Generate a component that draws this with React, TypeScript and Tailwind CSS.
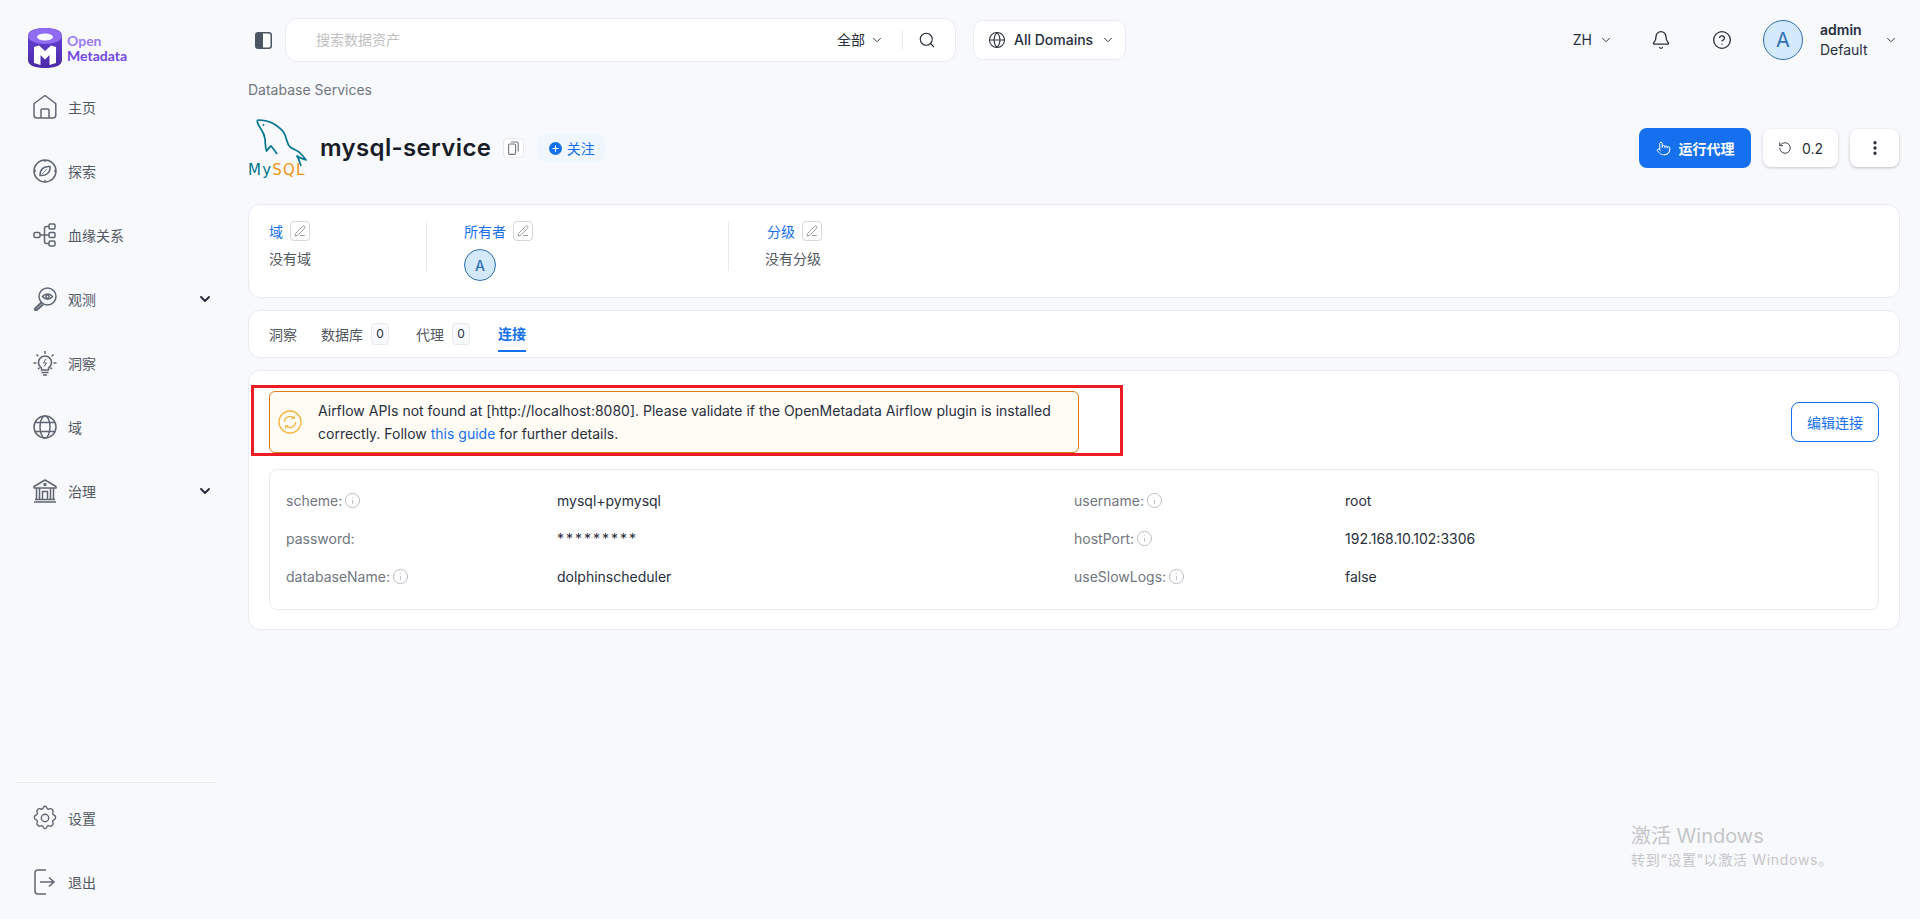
import { ChevronDown, Search, Globe, Bell, CircleHelp, RotateCcw, EllipsisVertical, Pointer, PenLine, Info, Plus } from "lucide-react"

const FONT = "font-['Inter','Noto_Sans_CJK_SC',sans-serif]"

function HomeIcon() {
  return (
    <svg width="24" height="26" viewBox="0 0 24 26" fill="none" stroke="#5f6673" strokeWidth="1.5" strokeLinejoin="round">
      <path d="M12 1.5 L22 9 a1.5 1.5 0 0 1 .8 1.5 V21 a3 3 0 0 1 -3 3 H4 a3 3 0 0 1 -3 -3 V10.5 A1.5 1.5 0 0 1 1.8 9 Z" />
      <path d="M8 24 V16 a1 1 0 0 1 1 -1 h6 a1 1 0 0 1 1 1 v8" />
    </svg>
  )
}

function CompassIcon() {
  return (
    <svg width="24" height="24" viewBox="0 0 24 24" fill="none" stroke="#5f6673" strokeWidth="1.5">
      <circle cx="12" cy="12" r="11" />
      <path d="M12 1v2M12 21v2M1 12h2M21 12h2" />
      <path d="M7 16.5 C7 10 11 7 17 7.5 C17.5 13.5 13.5 17 7 16.5 Z" />
      <path d="M9 15 L14 10" strokeWidth="0.8" />
    </svg>
  )
}

function LineageIcon() {
  return (
    <svg width="24" height="24" viewBox="0 0 24 24" fill="none" stroke="#5f6673" strokeWidth="1.5">
      <rect x="1" y="9.5" width="6" height="5" rx="1.2" />
      <rect x="16" y="1" width="6" height="5" rx="1.2" />
      <rect x="16" y="9.5" width="6" height="5" rx="1.2" />
      <rect x="16" y="18" width="6" height="5" rx="1.2" />
      <path d="M7 12 H16 M11.5 12 V5.5 a2 2 0 0 1 2 -2 H16 M11.5 12 V18.5 a2 2 0 0 0 2 2 H16" />
    </svg>
  )
}

function ObserveIcon() {
  return (
    <svg width="24" height="24" viewBox="0 0 24 24" fill="none" stroke="#5f6673" strokeWidth="1.5">
      <circle cx="14.5" cy="9.5" r="8.5" />
      <path d="M9.5 9.5 C12 6 17 6 19.5 9.5 C17 13 12 13 9.5 9.5 Z" />
      <circle cx="14.5" cy="9.5" r="1.6" />
      <path d="M8.5 15.5 L2 21.5 a1.2 1.2 0 0 0 1.8 1.5 L10 17.5" strokeWidth="2" />
    </svg>
  )
}

function InsightIcon() {
  return (
    <svg width="24" height="26" viewBox="0 0 24 26" fill="none" stroke="#5f6673" strokeWidth="1.5">
      <path d="M12 1v3M3.5 4.5l1.8 1.8M20.5 4.5l-1.8 1.8M0.5 13h3M20.5 13h3M5 19l1.6-1.4M19 19l-1.6-1.4" />
      <path d="M8.5 20 V18 C6.5 16.5 5.5 14.8 5.5 12.5 a6.5 6.5 0 0 1 13 0 C18.5 14.8 17.5 16.5 15.5 18 V20 Z" />
      <path d="M8.5 22.5 H15.5 M10 25 H14" />
      <path d="M12.8 9 L10.5 13 H13.5 L11.2 16.5" strokeWidth="1" />
    </svg>
  )
}

function DomainIcon() {
  return (
    <svg width="24" height="24" viewBox="0 0 24 24" fill="none" stroke="#5f6673" strokeWidth="1.5">
      <circle cx="12" cy="12" r="11" />
      <ellipse cx="12" cy="12" rx="5" ry="11" />
      <path d="M2.2 7.5 H21.8 M2.2 16.5 H21.8" />
    </svg>
  )
}

function GovernIcon() {
  return (
    <svg width="24" height="24" viewBox="0 0 24 24" fill="none" stroke="#5f6673" strokeWidth="1.5">
      <path d="M12 1 L23 7.5 V9 H1 V7.5 Z" strokeLinejoin="round" />
      <circle cx="12" cy="5.5" r="1" />
      <path d="M3.5 9 V20 M6.5 9 V20 M17.5 9 V20 M20.5 9 V20 M9.5 20 V12.5 H14.5 V20" />
      <path d="M2 20.5 H22 M1 23 H23" />
    </svg>
  )
}

function GearIcon() {
  return (
    <svg width="26" height="26" viewBox="0 0 24 24" fill="none" stroke="#5f6673" strokeWidth="1.3" strokeLinejoin="round">
      <path d="M12 1.2c1 0 1.4.7 1.7 1.6.3.9 1.3 1.3 2.1.9.9-.4 1.7-.6 2.4.1l.9.9c.7.7.5 1.5.1 2.4-.4.8 0 1.8.9 2.1.9.3 1.6.7 1.6 1.7v1.2c0 1-.7 1.4-1.6 1.7-.9.3-1.3 1.3-.9 2.1.4.9.6 1.7-.1 2.4l-.9.9c-.7.7-1.5.5-2.4.1-.8-.4-1.8 0-2.1.9-.3.9-.7 1.6-1.7 1.6s-1.4-.7-1.7-1.6c-.3-.9-1.3-1.3-2.1-.9-.9.4-1.7.6-2.4-.1l-.9-.9c-.7-.7-.5-1.5-.1-2.4.4-.8 0-1.8-.9-2.1-.9-.3-1.6-.7-1.6-1.7v-1.2c0-1 .7-1.4 1.6-1.7.9-.3 1.3-1.3.9-2.1-.4-.9-.6-1.7.1-2.4l.9-.9c.7-.7 1.5-.5 2.4-.1.8.4 1.8 0 2.1-.9.3-.9.7-1.6 1.7-1.6Z" />
      <circle cx="12" cy="12" r="3.4" />
    </svg>
  )
}

function LogoutIcon() {
  return (
    <svg width="24" height="26" viewBox="0 0 24 26" fill="none" stroke="#5f6673" strokeWidth="1.5">
      <path d="M13 1 H5 a3 3 0 0 0 -3 3 V22 a3 3 0 0 0 3 3 H13" />
      <path d="M7 13 H21 M16 8.5 L21 13 L16 17.5" />
    </svg>
  )
}

function OmLogo() {
  return (
    <svg width="34" height="40" viewBox="0 0 34 40">
      <defs>
        <linearGradient id="omBody" x1="0" y1="0" x2="0" y2="1">
          <stop offset="0" stopColor="#6a44d8" />
          <stop offset="1" stopColor="#4a2aa8" />
        </linearGradient>
      </defs>
      <path d="M0 8 C0 2 8 0 17 0 C26 0 34 2 34 8 V32 C34 38 26 40 17 40 C8 40 0 38 0 32 Z" fill="url(#omBody)" />
      <ellipse cx="17" cy="8" rx="17" ry="8" fill="#8f6cf2" />
      <ellipse cx="17" cy="9" rx="8" ry="3.5" fill="#f8f9fd" />
      <path d="M6 35 V19 L11 17.5 L17 23 L23 17.5 L28 19 V35 L21.5 37 V27 L17 31.5 L12.5 27 V37 Z" fill="#ffffff" />
    </svg>
  )
}

function MysqlLogo() {
  return (
    <div className="relative w-[62px] h-[60px]">
      <svg width="62" height="60" viewBox="0 0 62 60" fill="none" className="absolute inset-0">
        <path
          d="M9.5 2 C14 2 21 3 26 6 C31 9 35 12 37 17 C39 22 39 26 42 29 C45 31 48 32 51 34 C54 37 56 39 58 42 C55 41 52 40 49 38 C51 41 52 45 53 48"
          stroke="#00758f"
          strokeWidth="1.7"
          strokeLinejoin="round"
        />
        <path
          d="M9.5 2 C8.5 5 11 8 13 11 C15 14 16.5 17 17 21 C17.5 25 17 29 18.5 33 C20 31 21.5 29 23 28 C25 30 27 33 29 36"
          stroke="#00758f"
          strokeWidth="1.7"
          strokeLinejoin="round"
        />
        <circle cx="15.5" cy="7" r="0.9" fill="#00758f" />
      </svg>
      <div className="absolute left-0 top-[45px] text-[15px] leading-[14px] font-['DejaVu_Sans',sans-serif] whitespace-nowrap tracking-[1.2px]">
        <span className="text-[#00758f]">My</span>
        <span className="text-[#f29111]">SQL</span>
      </div>
    </div>
  )
}

function NavItem({ icon, label, hasChevron }: { icon: React.ReactNode; label: string; hasChevron?: boolean }) {
  return (
    <div className="flex items-center h-[64px] pl-[32px] pr-[19px]">
      <span className="w-[26px] h-[26px] flex items-center justify-center shrink-0">{icon}</span>
      <span className="ml-[10px] text-[14px] text-[#535862] flex-1">{label}</span>
      {hasChevron && <ChevronDown size={16} strokeWidth={3} className="text-[#292f3d]" />}
    </div>
  )
}

function EditBox() {
  return (
    <span className="w-[20px] h-[20px] ml-[7px] rounded-[4px] border border-[#d5d7da] bg-white flex items-center justify-center">
      <PenLine size={12} strokeWidth={1.4} className="text-[#717680]" />
    </span>
  )
}

function TinyAvatar() {
  return (
    <span className="w-[32px] h-[32px] rounded-full border border-[#2f6fb3] bg-[#d4e9fc] text-[#2f6fb3] text-[14px] font-medium flex items-center justify-center">
      A
    </span>
  )
}

function ConfigLabel({ text, info }: { text: string; info?: boolean }) {
  return (
    <div className="flex items-center gap-[2px] text-[14px] text-[#717680]">
      <span>{text}</span>
      {info && <Info size={17} strokeWidth={1.2} className="text-[#b0b4ba]" />}
    </div>
  )
}

function ConfigValue({ text, spaced }: { text: string; spaced?: boolean }) {
  return <div className={spaced ? "text-[14px] text-[#292f3d] tracking-[2px]" : "text-[14px] text-[#292f3d]"}>{text}</div>
}

export default function App() {
  return (
    <div className={`${FONT} relative flex w-full h-[919px] overflow-hidden bg-[#f8f9fd]`}>
      {/* Sidebar */}
      <aside className="w-[232px] shrink-0 flex flex-col">
        <div className="flex items-center pl-[28px] pt-[20px] h-[75px]">
          <OmLogo />
          <div className="ml-[5px] text-[14px] leading-[15px] font-bold font-['Lato',sans-serif]">
            <div className="text-[#9b7bf5]">Open</div>
            <div className="text-[#7147e8]">Metadata</div>
          </div>
        </div>
        <nav className="flex flex-col">
          <NavItem icon={<HomeIcon />} label="主页" />
          <NavItem icon={<CompassIcon />} label="探索" />
          <NavItem icon={<LineageIcon />} label="血缘关系" />
          <NavItem icon={<ObserveIcon />} label="观测" hasChevron />
          <NavItem icon={<InsightIcon />} label="洞察" />
          <NavItem icon={<DomainIcon />} label="域" />
          <NavItem icon={<GovernIcon />} label="治理" hasChevron />
        </nav>
        <div className="mt-auto pb-[5px]">
          <div className="mx-[16px] mb-[3px] border-t border-[#e9eaeb]" />
          <NavItem icon={<GearIcon />} label="设置" />
          <NavItem icon={<LogoutIcon />} label="退出" />
        </div>
      </aside>

      {/* Main */}
      <main className="flex-1 min-w-0 flex flex-col">
        <header className="flex items-center h-[80px]">
          <svg width="17" height="17" viewBox="0 0 17 17" className="ml-[23px] shrink-0">
            <rect x="0.75" y="0.75" width="15.5" height="15.5" rx="2.5" fill="#ffffff" stroke="#4b5563" strokeWidth="1.5" />
            <path d="M1 3 a2 2 0 0 1 2 -2 H8 V16 H3 a2 2 0 0 1 -2 -2 Z" fill="#4b5563" />
          </svg>
          <div className="ml-[13px] w-[671px] h-[44px] rounded-[12px] border border-[#e9eaf2] bg-white flex items-center pl-[30px] pr-[19px]">
            <span className="flex-1 text-[14px] text-[#bfbfbf] -translate-y-px">搜索数据资产</span>
            <span className="text-[14px] text-[#292f3d] -translate-y-px">全部</span>
            <ChevronDown size={14} strokeWidth={1.6} className="ml-[5px] text-[#292f3d]" />
            <span className="ml-[18px] w-px h-[20px] bg-[#e9eaeb]" />
            <Search size={18} strokeWidth={1.5} className="ml-[15px] text-[#292f3d]" />
          </div>
          <div className="ml-[17px] w-[153px] h-[40px] rounded-[10px] border border-[#e9eaf2] bg-white flex items-center pl-[14px]">
            <Globe size={18} strokeWidth={1.4} className="text-[#292f3d]" />
            <span className="ml-[8px] text-[14px] font-medium text-[#292f3d] -translate-y-px">All Domains</span>
            <ChevronDown size={14} strokeWidth={1.6} className="ml-[8px] text-[#292f3d]" />
          </div>
          <div className="ml-auto flex items-center pr-[22px]">
            <span className="text-[14px] text-[#292f3d] -translate-y-px">ZH</span>
            <ChevronDown size={14} strokeWidth={1.6} className="ml-[7px] text-[#292f3d]" />
            <Bell size={20} strokeWidth={1.6} className="ml-[38px] text-[#292f3d]" />
            <CircleHelp size={20} strokeWidth={1.6} className="ml-[41px] text-[#292f3d]" />
            <span className="ml-[31px] w-[40px] h-[40px] rounded-full border border-[#2f6fb3] bg-[#d4e9fc] text-[#2f6fb3] text-[20px] flex items-center justify-center">
              A
            </span>
            <div className="ml-[17px] w-[64px]">
              <div className="text-[14px] leading-[20px] font-semibold text-[#292f3d]">admin</div>
              <div className="text-[14px] leading-[20px] text-[#292f3d]">Default</div>
            </div>
            <ChevronDown size={14} strokeWidth={1.6} className="text-[#292f3d]" />
          </div>
        </header>

        <div className="pl-[16px] pr-[20px] flex flex-col">
          <div className="h-[20px] text-[14px] leading-[20px] text-[#717680]">Database Services</div>

          {/* Title row */}
          <div className="mt-[18px] h-[60px] flex items-center">
            <MysqlLogo />
            <h1 className="ml-[10px] text-[24px] font-semibold text-[#181d27] tracking-[0.35px]">mysql-service</h1>
            <span className="ml-[12px] w-[21px] h-[20px] rounded-[4px] border border-[#e9eaeb] bg-white flex items-center justify-center">
              <svg width="11" height="14" viewBox="0 0 11 14" fill="none" stroke="#717680" strokeWidth="1.1">
                <rect x="0.6" y="3" width="7" height="10.4" rx="1.2" />
                <path d="M3 1 H8.8 a1.4 1.4 0 0 1 1.4 1.4 V10.5" />
              </svg>
            </span>
            <span className="ml-[13px] w-[68px] h-[28px] rounded-[8px] bg-[#f0f6fe] flex items-center justify-center pl-[1px] text-[14px] text-[#1570ef]">
              <span className="w-[13px] h-[13px] rounded-full bg-[#1570ef] flex items-center justify-center mr-[5px]">
                <Plus size={9} strokeWidth={3} className="text-white" />
              </span>
              关注
            </span>
            <div className="ml-auto mr-[1px] flex items-center">
              <button className="w-[112px] h-[40px] rounded-[8px] bg-[#1570ef] text-white text-[14px] font-semibold flex items-center justify-center gap-[8px]">
                <Pointer size={15} strokeWidth={1.5} />
                运行代理
              </button>
              <button className="ml-[12px] w-[75px] h-[38px] rounded-[8px] bg-white shadow-[0_1px_3px_rgba(10,13,18,0.2)] text-[14px] text-[#292f3d] flex items-center justify-center gap-[10px]">
                <RotateCcw size={14} strokeWidth={1.5} />
                0.2
              </button>
              <button className="ml-[12px] w-[49px] h-[38px] rounded-[8px] bg-white shadow-[0_1px_3px_rgba(10,13,18,0.25)] text-[#292f3d] flex items-center justify-center">
                <EllipsisVertical size={18} strokeWidth={2.5} />
              </button>
            </div>
          </div>

          {/* Info card */}
          <section className="mt-[26px] h-[94px] rounded-[12px] border border-[#e9eaf2] bg-white flex items-start pt-[16px]">
            <div className="w-[178px] h-[50px] pl-[20px] border-r border-[#e9eaeb]">
              <div className="flex items-center h-[20px] text-[14px] text-[#1570ef]">
                域<EditBox />
              </div>
              <div className="mt-[7px] text-[14px] text-[#535862]">没有域</div>
            </div>
            <div className="w-[302px] h-[50px] pl-[37px] border-r border-[#e9eaeb]">
              <div className="flex items-center h-[20px] text-[14px] text-[#1570ef]">
                所有者<EditBox />
              </div>
              <div className="mt-[8px]">
                <TinyAvatar />
              </div>
            </div>
            <div className="pl-[38px]">
              <div className="flex items-center h-[20px] text-[14px] text-[#1570ef]">
                分级<EditBox />
              </div>
              <div className="mt-[7px] -ml-[2px] text-[14px] text-[#535862]">没有分级</div>
            </div>
          </section>

          {/* Tabs */}
          <section className="mt-[12px] h-[48px] rounded-[12px] border border-[#e9eaf2] bg-white flex items-stretch pl-[20px] text-[14px] text-[#535862]">
            <span className="flex items-center">洞察</span>
            <span className="ml-[24px] flex items-center">
              数据库
              <span className="ml-[8px] w-[18px] h-[22px] rounded-[4px] border border-[#e9eaeb] bg-[#f8f9fd] text-[12px] text-[#292f3d] flex items-center justify-center">0</span>
            </span>
            <span className="ml-[27px] flex items-center">
              代理
              <span className="ml-[8px] w-[18px] h-[22px] rounded-[4px] border border-[#e9eaeb] bg-[#f8f9fd] text-[12px] text-[#292f3d] flex items-center justify-center">0</span>
            </span>
            <span className="ml-[28px] flex items-center font-semibold text-[#1570ef] border-b-2 border-[#1570ef] h-[34px] mt-[7px] pb-[1px]">连接</span>
          </section>

          {/* Connection card */}
          <section className="mt-[12px] h-[260px] rounded-[12px] border border-[#e9eaf2] bg-white px-[20px] pt-[20px]">
            <div className="flex items-start">
              <div className="w-[810px] h-[62px] rounded-[6px] border border-[#e07b1a] bg-[#fffbf5] flex items-center pl-[8px]">
                <svg width="24" height="24" viewBox="0 0 24 24" fill="none" stroke="#f5b544" strokeWidth="1.3" className="shrink-0">
                  <circle cx="12" cy="12" r="11" />
                  <path d="M6.5 12 a5.5 5.5 0 0 1 9.5 -3.8 M17.5 12 a5.5 5.5 0 0 1 -9.5 3.8" />
                  <path d="M16.5 5.5 V8.5 H13.5 M7.5 18.5 V15.5 H10.5" strokeWidth="1" />
                </svg>
                <p className="ml-[16px] text-[14px] leading-[23px] text-[#292f3d]">
                  Airflow APIs not found at [http://localhost:8080]. Please validate if the OpenMetadata Airflow plugin is installed
                  <br />
                  correctly. Follow <span className="text-[#1570ef]">this guide</span> for further details.
                </p>
              </div>
              <button className="ml-auto mt-[11px] w-[88px] h-[40px] rounded-[8px] border border-[#1570ef] bg-white text-[14px] text-[#1570ef]">
                编辑连接
              </button>
            </div>
            <div className="mt-[16px] h-[141px] rounded-[8px] border border-[#e9eaf2] bg-white pl-[16px] pt-[11px] grid grid-cols-[271px_517px_271px_1fr] auto-rows-[38px] items-center">
              <ConfigLabel text="scheme:" info />
              <ConfigValue text="mysql+pymysql" />
              <ConfigLabel text="username:" info />
              <ConfigValue text="root" />
              <ConfigLabel text="password:" />
              <ConfigValue text="*********" spaced />
              <ConfigLabel text="hostPort:" info />
              <ConfigValue text="192.168.10.102:3306" />
              <ConfigLabel text="databaseName:" info />
              <ConfigValue text="dolphinscheduler" />
              <ConfigLabel text="useSlowLogs:" info />
              <ConfigValue text="false" />
            </div>
          </section>
        </div>
      </main>

      {/* Screenshot annotation */}
      <div className="absolute left-[251px] top-[385px] w-[872px] h-[71px] border-[3px] border-[#ed1c24] pointer-events-none" />

      {/* Windows watermark */}
      <div className="absolute left-[1631px] top-[823px] text-[#c6c6c8] pointer-events-none whitespace-nowrap">
        <div className="text-[20px] leading-[27px]">激活 Windows</div>
        <div className="text-[14px] leading-[20px] tracking-[0.7px]">转到“设置”以激活 Windows。</div>
      </div>
    </div>
  )
}
